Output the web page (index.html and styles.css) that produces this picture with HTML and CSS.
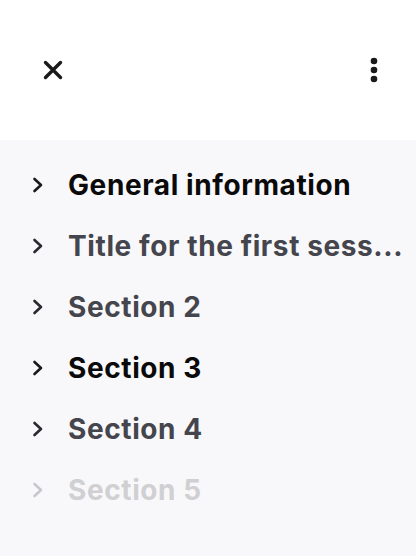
FILE: index.html
```html
<!DOCTYPE html>
<html>
<head>
<meta charset="utf-8">
<link rel="stylesheet" href="styles.css">
</head>
<body>
<header class="topbar">
  <button class="icon-btn close" aria-label="Close">
    <svg width="20" height="20" viewBox="0 0 20 20"><path d="M2.5 2.5 L17.5 17.5 M17.5 2.5 L2.5 17.5" stroke="#1a1a1a" stroke-width="3.4" stroke-linecap="round" fill="none"/></svg>
  </button>
  <button class="icon-btn more" aria-label="More">
    <svg width="8" height="26" viewBox="0 0 8 26"><circle cx="4" cy="4" r="3.3" fill="#1a1a1a"/><circle cx="4" cy="13" r="3.3" fill="#1a1a1a"/><circle cx="4" cy="22" r="3.3" fill="#1a1a1a"/></svg>
  </button>
</header>
<main class="outline">
  <div class="row strong"><span class="chev"><svg width="12" height="16" viewBox="0 0 12 16"><path d="M2.5 2 L9 8 L2.5 14" stroke="currentColor" stroke-width="2.6" fill="none" stroke-linecap="round" stroke-linejoin="round"/></svg></span><span class="label">General information</span></div>
  <div class="row muted"><span class="chev"><svg width="12" height="16" viewBox="0 0 12 16"><path d="M2.5 2 L9 8 L2.5 14" stroke="currentColor" stroke-width="2.6" fill="none" stroke-linecap="round" stroke-linejoin="round"/></svg></span><span class="label">Title for the first sess...</span></div>
  <div class="row muted"><span class="chev"><svg width="12" height="16" viewBox="0 0 12 16"><path d="M2.5 2 L9 8 L2.5 14" stroke="currentColor" stroke-width="2.6" fill="none" stroke-linecap="round" stroke-linejoin="round"/></svg></span><span class="label">Section 2</span></div>
  <div class="row strong"><span class="chev"><svg width="12" height="16" viewBox="0 0 12 16"><path d="M2.5 2 L9 8 L2.5 14" stroke="currentColor" stroke-width="2.6" fill="none" stroke-linecap="round" stroke-linejoin="round"/></svg></span><span class="label">Section 3</span></div>
  <div class="row muted"><span class="chev"><svg width="12" height="16" viewBox="0 0 12 16"><path d="M2.5 2 L9 8 L2.5 14" stroke="currentColor" stroke-width="2.6" fill="none" stroke-linecap="round" stroke-linejoin="round"/></svg></span><span class="label">Section 4</span></div>
  <div class="row faded"><span class="chev"><svg width="12" height="16" viewBox="0 0 12 16"><path d="M2.5 2 L9 8 L2.5 14" stroke="currentColor" stroke-width="2.6" fill="none" stroke-linecap="round" stroke-linejoin="round"/></svg></span><span class="label">Section 5</span></div>
</main>
</body>
</html>
```
FILE: styles.css
```css
html, body {
  margin: 0;
  padding: 0;
  height: 100%;
}
body {
  font-family: Inter, "Noto Sans", sans-serif;
  background: #f8f8fa;
}
.topbar {
  background: #ffffff;
  height: 140px;
  display: flex;
  align-items: center;
  justify-content: space-between;
  padding: 0 38px 0 43px;
}
.icon-btn {
  border: 0;
  background: none;
  padding: 0;
  display: flex;
  align-items: center;
  justify-content: center;
}
.outline {
  padding-top: 14px;
  padding-left: 32px;
  padding-right: 12px;
}
.row {
  height: 61px;
  display: flex;
  align-items: center;
  gap: 24px;
  font-size: 28px;
  font-weight: 700;
  letter-spacing: 0.6px;
  white-space: nowrap;
}
.chev {
  display: flex;
  width: 12px;
  flex: none;
}
.label {
  min-width: 0;
}
.strong { color: #0a0a0a; }
.strong .chev { color: #1a1a1a; }
.muted { color: #45454d; }
.muted .chev { color: #2a2a2e; }
.faded { color: #d0d0d3; }
.faded .chev { color: #c8c8cc; }
```
